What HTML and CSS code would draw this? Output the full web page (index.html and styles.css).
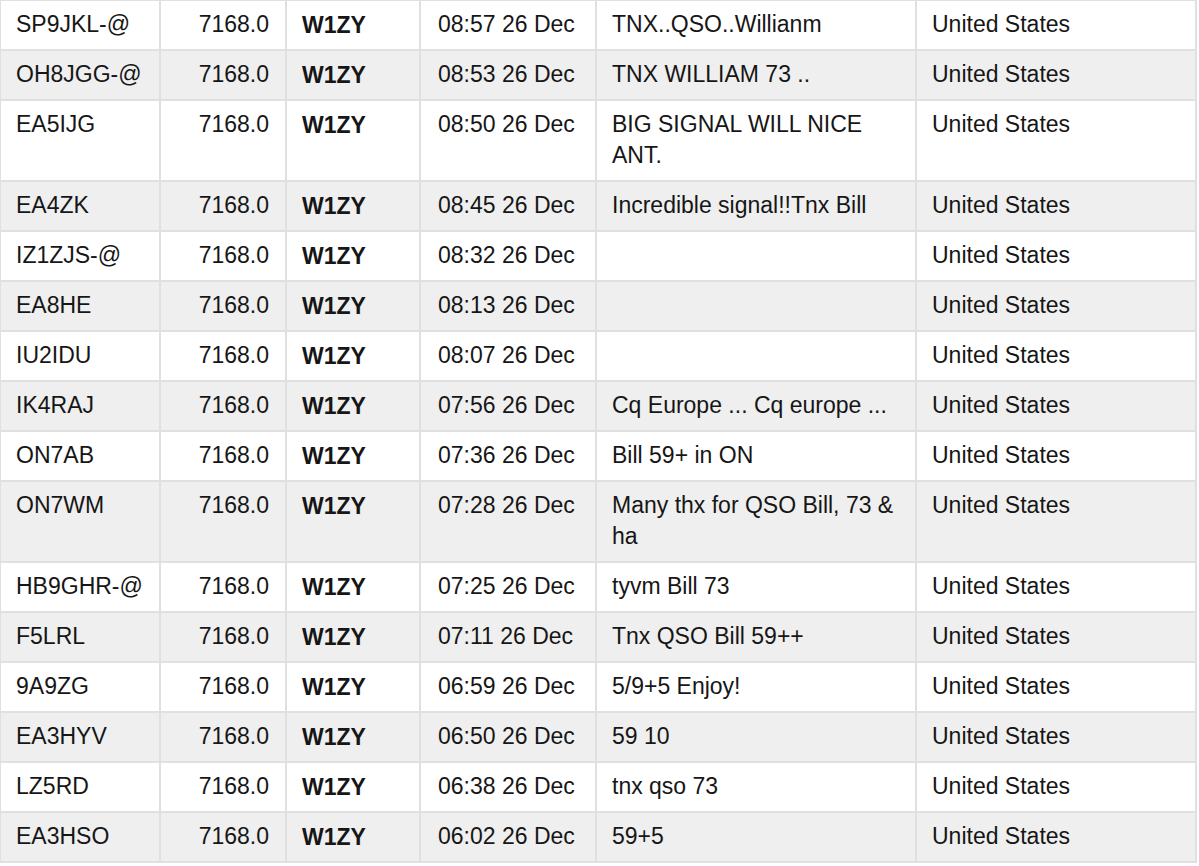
FILE: index.html
```html
<!DOCTYPE html>
<html>
<head>
<meta charset="utf-8">
<link rel="stylesheet" href="styles.css">
</head>
<body>
<table class="log">
  <colgroup>
    <col class="c-call"><col class="c-freq"><col class="c-de"><col class="c-time"><col class="c-msg"><col class="c-country">
  </colgroup>
  <tbody>
    <tr><td class="call">SP9JKL-@</td><td class="num">7168.0</td><td class="de">W1ZY</td><td class="time">08:57 26 Dec</td><td class="msg">TNX..QSO..Willianm</td><td class="msg">United States</td></tr>
    <tr><td class="call">OH8JGG-@</td><td class="num">7168.0</td><td class="de">W1ZY</td><td class="time">08:53 26 Dec</td><td class="msg">TNX WILLIAM 73 ..</td><td class="msg">United States</td></tr>
    <tr><td class="call">EA5IJG</td><td class="num">7168.0</td><td class="de">W1ZY</td><td class="time">08:50 26 Dec</td><td class="msg">BIG SIGNAL WILL NICE ANT.</td><td class="msg">United States</td></tr>
    <tr><td class="call">EA4ZK</td><td class="num">7168.0</td><td class="de">W1ZY</td><td class="time">08:45 26 Dec</td><td class="msg">Incredible signal!!Tnx Bill</td><td class="msg">United States</td></tr>
    <tr><td class="call">IZ1ZJS-@</td><td class="num">7168.0</td><td class="de">W1ZY</td><td class="time">08:32 26 Dec</td><td class="msg"></td><td class="msg">United States</td></tr>
    <tr><td class="call">EA8HE</td><td class="num">7168.0</td><td class="de">W1ZY</td><td class="time">08:13 26 Dec</td><td class="msg"></td><td class="msg">United States</td></tr>
    <tr><td class="call">IU2IDU</td><td class="num">7168.0</td><td class="de">W1ZY</td><td class="time">08:07 26 Dec</td><td class="msg"></td><td class="msg">United States</td></tr>
    <tr><td class="call">IK4RAJ</td><td class="num">7168.0</td><td class="de">W1ZY</td><td class="time">07:56 26 Dec</td><td class="msg">Cq Europe ... Cq europe ...</td><td class="msg">United States</td></tr>
    <tr><td class="call">ON7AB</td><td class="num">7168.0</td><td class="de">W1ZY</td><td class="time">07:36 26 Dec</td><td class="msg">Bill 59+ in ON</td><td class="msg">United States</td></tr>
    <tr><td class="call">ON7WM</td><td class="num">7168.0</td><td class="de">W1ZY</td><td class="time">07:28 26 Dec</td><td class="msg">Many thx for QSO Bill, 73 &amp; ha</td><td class="msg">United States</td></tr>
    <tr><td class="call">HB9GHR-@</td><td class="num">7168.0</td><td class="de">W1ZY</td><td class="time">07:25 26 Dec</td><td class="msg">tyvm Bill 73</td><td class="msg">United States</td></tr>
    <tr><td class="call">F5LRL</td><td class="num">7168.0</td><td class="de">W1ZY</td><td class="time">07:11 26 Dec</td><td class="msg">Tnx QSO Bill 59++</td><td class="msg">United States</td></tr>
    <tr><td class="call">9A9ZG</td><td class="num">7168.0</td><td class="de">W1ZY</td><td class="time">06:59 26 Dec</td><td class="msg">5/9+5 Enjoy!</td><td class="msg">United States</td></tr>
    <tr><td class="call">EA3HYV</td><td class="num">7168.0</td><td class="de">W1ZY</td><td class="time">06:50 26 Dec</td><td class="msg">59 10</td><td class="msg">United States</td></tr>
    <tr><td class="call">LZ5RD</td><td class="num">7168.0</td><td class="de">W1ZY</td><td class="time">06:38 26 Dec</td><td class="msg">tnx qso 73</td><td class="msg">United States</td></tr>
    <tr><td class="call">EA3HSO</td><td class="num">7168.0</td><td class="de">W1ZY</td><td class="time">06:02 26 Dec</td><td class="msg">59+5</td><td class="msg">United States</td></tr>
  </tbody>
</table>
</body>
</html>
```
FILE: styles.css
```css
html, body {
  margin: 0;
  padding: 0;
  background: #ffffff;
}
body {
  font-family: "Liberation Sans", Arial, Helvetica, sans-serif;
  font-size: 23px;
  line-height: 31px;
  color: #161616;
}
.log {
  border-collapse: collapse;
  table-layout: fixed;
  width: 1196px;
  margin-top: -1px;
  margin-left: -1px;
}
.c-call { width: 160px; }
.c-freq { width: 126px; }
.c-de { width: 134px; }
.c-time { width: 176px; }
.c-msg { width: 320px; }
.c-country { width: 280px; }
.log td {
  border: 2px solid #e0e0e0;
  padding: 8px 16px 9px 16px;
  vertical-align: top;
  text-align: left;
  white-space: normal;
}
.log td.call {
  padding-left: 15px;
  padding-right: 8px;
  white-space: nowrap;
}
.log td.time {
  padding-left: 17px;
}
.log td.msg {
  padding-left: 15px;
}
.log tr:nth-child(even) td {
  background: #efefef;
}
.log td.num {
  text-align: right;
}
.log td.de {
  font-weight: bold;
  padding-left: 15px;
  padding-top: 9px;
  padding-bottom: 8px;
}
```
